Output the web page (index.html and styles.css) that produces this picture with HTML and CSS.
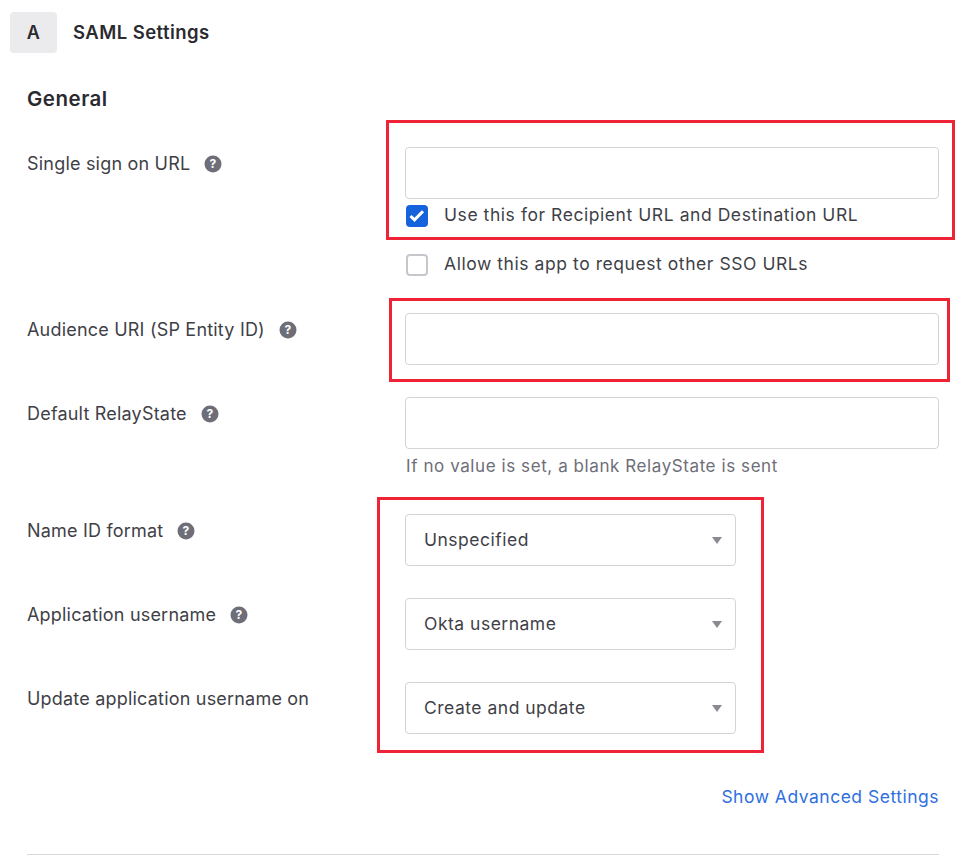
FILE: index.html
```html
<!DOCTYPE html>
<html lang="en">
<head>
<meta charset="utf-8">
<title>SAML Settings</title>
<link rel="stylesheet" href="styles.css">
</head>
<body>
<main class="page">
  <header class="head">
    <div class="badge">A</div>
    <h1 class="title">SAML Settings</h1>
  </header>
  <section class="form">
    <h2 class="section">General</h2>
    <div class="row row-sso">
      <div class="label"><span>Single sign on URL</span><svg class="help" viewBox="0 0 18 18"><circle cx="9" cy="9" r="8.5"/><text x="9" y="13" text-anchor="middle">?</text></svg></div>
      <div class="field">
        <div class="input"></div>
        <div class="check check-first"><span class="box on"><svg viewBox="0 0 22 22"><path d="M4.5 11l4 3.8 8.5-8.6"/></svg></span><span class="check-text">Use this for Recipient URL and Destination URL</span></div>
        <div class="check check-second"><span class="box"></span><span class="check-text">Allow this app to request other SSO URLs</span></div>
      </div>
    </div>
    <div class="row row-aud">
      <div class="label"><span>Audience URI (SP Entity ID)</span><svg class="help" viewBox="0 0 18 18"><circle cx="9" cy="9" r="8.5"/><text x="9" y="13" text-anchor="middle">?</text></svg></div>
      <div class="field"><div class="input"></div></div>
    </div>
    <div class="row row-relay">
      <div class="label"><span>Default RelayState</span><svg class="help" viewBox="0 0 18 18"><circle cx="9" cy="9" r="8.5"/><text x="9" y="13" text-anchor="middle">?</text></svg></div>
      <div class="field">
        <div class="input"></div>
        <p class="hint">If no value is set, a blank RelayState is sent</p>
      </div>
    </div>
    <div class="row row-select row-first">
      <div class="label"><span>Name ID format</span><svg class="help" viewBox="0 0 18 18"><circle cx="9" cy="9" r="8.5"/><text x="9" y="13" text-anchor="middle">?</text></svg></div>
      <div class="field"><div class="select"><span>Unspecified</span><i class="caret"></i></div></div>
    </div>
    <div class="row row-select">
      <div class="label"><span>Application username</span><svg class="help" viewBox="0 0 18 18"><circle cx="9" cy="9" r="8.5"/><text x="9" y="13" text-anchor="middle">?</text></svg></div>
      <div class="field"><div class="select"><span>Okta username</span><i class="caret"></i></div></div>
    </div>
    <div class="row row-select">
      <div class="label"><span>Update application username on</span></div>
      <div class="field"><div class="select"><span>Create and update</span><i class="caret"></i></div></div>
    </div>
    <div class="more"><a class="link" href="#">Show Advanced Settings</a></div>
    <hr class="rule">
  </section>
</main>
<div class="mark mark-a"></div>
<div class="mark mark-b"></div>
<div class="mark mark-c"></div>
</body>
</html>
```
FILE: styles.css
```css
* { box-sizing: border-box; }
html, body { margin: 0; height: 856px; overflow: hidden; background: #fff; }
body { font-family: Inter, "Noto Sans", sans-serif; font-size: 17.5px; letter-spacing: .5px; line-height: 24px; color: #3f3f47; position: relative; }
.page { padding: 12px 27px 0 10px; }
.head { display: flex; align-items: center; gap: 16px; height: 41px; }
.badge { width: 47px; height: 41px; border-radius: 4px; background: #ebebed; color: #2a2a30; font-weight: 600; display: flex; align-items: center; justify-content: center; font-size: 18px; }
.title { margin: 0; font-size: 18.5px; letter-spacing: .45px; font-weight: 600; color: #2a2a30; position: relative; top: -1px; }
.form { padding-left: 17px; }
.section { margin: 33px 0 0; font-size: 20.5px; letter-spacing: .5px; line-height: 26px; font-weight: 600; color: #2a2a30; height: 26px; }
.row { display: flex; align-items: flex-start; }
.row-sso { margin-top: 35px; height: 166px; }
.row-aud { height: 84px; }
.row-relay { height: 117px; }
.row-select { height: 84px; }
.label { width: 378px; flex: none; display: flex; align-items: center; gap: 14px; padding-top: 5px; height: 29px; font-size: 18px; letter-spacing: .2px; }
.help { width: 18px; height: 18px; flex: none; }
.help circle { fill: #6e6e78; }
.help text { fill: #fff; font-size: 12px; font-weight: 700; font-family: Inter, sans-serif; }
.field { flex: 1; min-width: 0; }
.input { height: 52px; border: 1px solid #d4d4d8; border-radius: 4px; background: #fff; }
.check { display: flex; align-items: center; gap: 16px; height: 22px; padding-left: 1px; }
.check-text { letter-spacing: .56px; padding-bottom: 2px; }
.check-first { margin-top: 6px; }
.check-second { margin-top: 27px; }
.box { width: 22px; height: 22px; flex: none; border: 2px solid #c6c6cc; border-radius: 4px; background: #fff; }
.box.on { background: #1662dd; border-color: #1662dd; position: relative; }
.box svg { position: absolute; left: -2px; top: -2px; width: 22px; height: 22px; }
.box path { fill: none; stroke: #fff; stroke-width: 3; }
.hint { margin: 5px 0 0; font-size: 17px; letter-spacing: .58px; line-height: 24px; color: #6e6e78; padding-left: 1px; }
.select { width: 331px; height: 52px; border: 1px solid #d4d4d8; border-radius: 4px; display: flex; align-items: center; justify-content: space-between; padding: 0 13px 0 18px; color: #3f3f47; }
.caret { width: 0; height: 0; border-left: 5px solid transparent; border-right: 5px solid transparent; border-top: 7px solid #8a8a90; }
.more { display: flex; justify-content: flex-end; margin-top: 19px; }
.link { color: #2f6fe0; text-decoration: none; }
.rule { margin: 45px 0 0; border: 0; height: 1px; background: #d8d8dc; }
.mark { position: absolute; border: 3px solid #ee2436; pointer-events: none; }
.mark-a { left: 386px; top: 120px; width: 569px; height: 120px; }
.mark-b { left: 389px; top: 298px; width: 561px; height: 84px; }
.mark-c { left: 377px; top: 497px; width: 387px; height: 256px; }
```
